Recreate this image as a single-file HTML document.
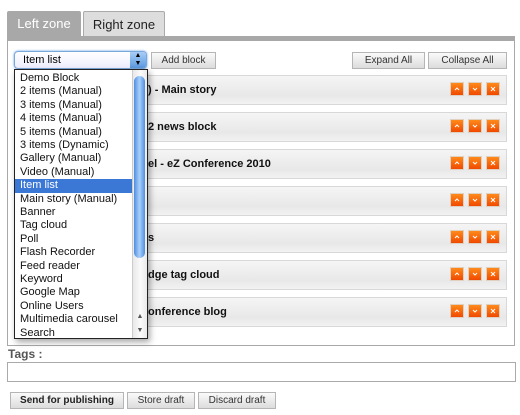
<!DOCTYPE html>
<html><head><style>
body{margin:0;width:520px;height:415px;background:#fff;font-family:"Liberation Sans",sans-serif;position:relative;overflow:hidden}
.a{position:absolute}
.tab{position:absolute;top:11px;height:26px;font-size:13px;line-height:26px;text-align:center;border-radius:2px 2px 0 0}
.btn{position:absolute;height:15px;border:1px solid #b5b5b5;background:linear-gradient(#fafafa,#dcdcdc);font-size:10px;line-height:15px;text-align:center;color:#333}
.row{position:absolute;left:14px;width:491px;height:28px;border:1px solid #d8d8d8;background:linear-gradient(#f5f5f5,#e8e8e8 70%,#f2f2f2)}
.row b{position:absolute;left:133px;top:8px;font-size:11px;color:#111}
.ob{position:absolute;width:14px;height:14px;background:linear-gradient(#ff8a1a,#f04a00);border:1px solid #e0d0c0;box-sizing:border-box}
.ob svg{position:absolute;left:0;top:0}
.li{position:absolute;left:0;width:118px;padding-left:5px;height:13.4px;font-size:11px;line-height:13px;color:#111;white-space:nowrap}
</style></head><body>
<div class="tab" style="left:7px;width:74px;background:#a8a8a8;color:#fff">Left zone</div>
<div class="tab" style="left:83px;width:80px;height:24px;background:#ddd;border:1px solid #aaa;border-bottom:none;color:#222">Right zone</div>
<div class="a" style="left:7px;top:36px;width:506px;height:304px;border:1px solid #a8a8a8;border-top:5px solid #a8a8a8"></div>

<div class="a" style="left:14px;top:51px;width:131px;height:16px;border:1px solid #7aa7dc;border-radius:4px;box-shadow:0 0 2px #5b9be0;background:linear-gradient(#fff,#eef);font-size:11px;line-height:16px"><span style="padding-left:8px">Item list</span>
<div class="a" style="right:0;top:0;width:16px;height:16px;background:linear-gradient(#a9cdf5,#5b99e0);border-radius:0 3px 3px 0;font-size:7px;line-height:8px;text-align:center">▲<br>▼</div></div>
<div class="btn" style="left:151px;top:52px;width:63px">Add block</div>
<div class="btn" style="left:352px;top:52px;width:71px">Expand All</div>
<div class="btn" style="left:428px;top:52px;width:77px">Collapse All</div>

<div class="row" style="top:75px"><b>) - Main story</b></div>
<div class="row" style="top:112px"><b>2 news block</b></div>
<div class="row" style="top:149px"><b>el - eZ Conference 2010</b></div>
<div class="row" style="top:186px"></div>
<div class="row" style="top:223px"><b>s</b></div>
<div class="row" style="top:260px"><b>dge tag cloud</b></div>
<div class="row" style="top:297px"><b>onference blog</b></div>
<div id="btns"></div>

<div class="a" style="left:14px;top:69px;width:132px;height:268px;border:1px solid #222;background:#fff;box-shadow:2px 3px 6px rgba(0,0,0,.35);overflow:hidden">
<div style="position:relative;top:2px">
<div class="li" style="top:0">Demo Block</div>
<div class="li" style="top:13.4px">2 items (Manual)</div>
<div class="li" style="top:26.8px">3 items (Manual)</div>
<div class="li" style="top:40.2px">4 items (Manual)</div>
<div class="li" style="top:53.6px">5 items (Manual)</div>
<div class="li" style="top:67px">3 items (Dynamic)</div>
<div class="li" style="top:80.4px">Gallery (Manual)</div>
<div class="li" style="top:93.8px">Video (Manual)</div>
<div class="li" style="top:107.2px;background:#3b77d5;color:#fff">Item list</div>
<div class="li" style="top:120.6px">Main story (Manual)</div>
<div class="li" style="top:134px">Banner</div>
<div class="li" style="top:147.4px">Tag cloud</div>
<div class="li" style="top:160.8px">Poll</div>
<div class="li" style="top:174.2px">Flash Recorder</div>
<div class="li" style="top:187.6px">Feed reader</div>
<div class="li" style="top:201px">Keyword</div>
<div class="li" style="top:214.4px">Google Map</div>
<div class="li" style="top:227.8px">Online Users</div>
<div class="li" style="top:241.2px">Multimedia carousel</div>
<div class="li" style="top:254.6px">Search</div>
</div>
<div class="a" style="left:117px;top:0;width:15px;height:268px;background:linear-gradient(90deg,#e8e8e8,#fafafa,#e8e8e8);border-left:1px solid #ccc"></div>
<div class="a" style="left:119px;top:6px;width:11px;height:182px;border-radius:6px;background:linear-gradient(90deg,#4f8fe0,#a9d0fa 50%,#4f8fe0)"></div>
<div class="a" style="left:118px;top:240px;width:14px;height:28px;font-size:7px;line-height:14px;text-align:center;color:#555">▲<br>▼</div>
</div>

<div class="a" style="left:8px;top:347px;font-size:12px;font-weight:bold;color:#555">Tags :</div>
<div class="a" style="left:7px;top:362px;width:507px;height:18px;border:1px solid #aaa"></div>
<div class="btn" style="left:10px;top:392px;width:112px;font-weight:bold;color:#222">Send for publishing</div>
<div class="btn" style="left:127px;top:392px;width:66px">Store draft</div>
<div class="btn" style="left:198px;top:392px;width:76px">Discard draft</div>
<script>
var up='<svg width="12" height="12"><path d="M4 7L6 5L8 7" stroke="#fff" fill="none"/></svg>';
var dn='<svg width="12" height="12"><path d="M4 5L6 7L8 5" stroke="#fff" fill="none"/></svg>';
var x='<svg width="12" height="12"><path d="M4 4L8 8M8 4L4 8" stroke="#fff" fill="none"/></svg>';
var h='';for(var i=0;i<7;i++){var t=82+i*37;h+='<div class="ob" style="left:450px;top:'+t+'px">'+up+'</div><div class="ob" style="left:468px;top:'+t+'px">'+dn+'</div><div class="ob" style="left:486px;top:'+t+'px">'+x+'</div>';}
document.getElementById('btns').innerHTML=h;
</script>
</body></html>
